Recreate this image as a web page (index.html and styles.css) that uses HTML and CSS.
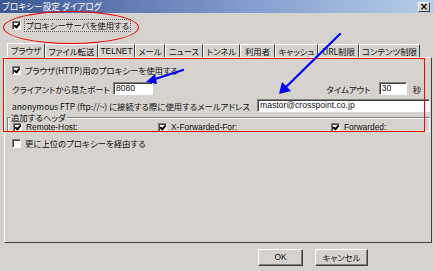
FILE: index.html
```html
<!DOCTYPE html>
<html lang="ja">
<head>
<meta charset="utf-8">
<title>プロキシー設定 ダイアログ</title>
<link rel="stylesheet" href="styles.css">
</head>
<body>
<div class="dialog">
  <div class="titlebar">
    <span class="title">プロキシー設定 ダイアログ</span>
    <span class="close">×</span>
  </div>
  <div class="main">
    <label class="chk top-chk"><span class="box checked"></span><span class="dotted">プロキシーサーバを使用する</span></label>
    <div class="tabs">
      <span class="tab sel w38">ブラウザ</span>
      <span class="tab w53">ファイル転送</span>
      <span class="tab w37 latin">TELNET</span>
      <span class="tab w30">メール</span>
      <span class="tab w38">ニュース</span>
      <span class="tab w37">トンネル</span>
      <span class="tab w35">利用者</span>
      <span class="tab w43">キャッシュ</span>
      <span class="tab w41">URL制限</span>
      <span class="tab w61">コンテンツ制限</span>
    </div>
    <div class="panel">
      <label class="chk row1"><span class="box checked"></span>ブラウザ(HTTP)用のプロキシーを使用する</label>
      <div class="row row2">
        <span class="lbl port-lbl">クライアントから見たポート</span>
        <span class="input port">8080</span>
        <span class="grow"></span>
        <span class="lbl">タイムアウト</span>
        <span class="input tmo">30</span>
        <span class="lbl sec">秒</span>
      </div>
      <div class="row row3">
        <span class="lbl mail-lbl">anonymous FTP (ftp://~) に接続する際に使用するメールアドレス</span>
        <span class="input mail">mastor@crosspoint.co.jp</span>
      </div>
      <div class="group">
        <span class="legend">追加するヘッダ</span>
        <div class="hdrs">
          <label class="chk"><span class="box checked"></span><span class="latin">Remote-Host:</span></label>
          <label class="chk"><span class="box checked"></span><span class="latin">X-Forwarded-For:</span></label>
          <label class="chk"><span class="box checked"></span><span class="latin">Forwarded:</span></label>
        </div>
      </div>
      <label class="chk row5"><span class="box"></span>更に上位のプロキシーを経由する</label>
    </div>
    <div class="footer">
      <span class="btn ok">OK</span>
      <span class="btn cancel">キャンセル</span>
    </div>
  </div>
  <div class="ellipse"></div>
  <div class="redbox"></div>
  <svg class="arrows" width="434" height="271" viewBox="0 0 434 271">
    <g stroke="#0000ff" stroke-width="2.2" fill="none" stroke-linecap="round">
      <line x1="340" y1="34" x2="284" y2="89"/>
      <line x1="183" y1="70" x2="152" y2="80"/>
    </g>
    <g fill="#0000ff">
      <polygon points="279,94 282,82 291,91"/>
      <polygon points="146,82 155,74 157,84"/>
    </g>
  </svg>
</div>
</body>
</html>
```

FILE: styles.css
```css
* { box-sizing: border-box; }
html, body { margin: 0; padding: 0; }
body {
  width: 434px;
  height: 271px;
  overflow: hidden;
  background: #d6d3ce;
  font-family: "Noto Sans CJK JP", "Noto Sans", sans-serif;
  font-size: 8.4px;
  font-feature-settings: "palt";
  color: #111;
}
.dialog {
  position: relative;
  width: 434px;
  height: 271px;
  display: flex;
  flex-direction: column;
}
.titlebar {
  height: 13px;
  display: flex;
  align-items: center;
  justify-content: space-between;
  padding: 0 4px 0 2px;
  background: linear-gradient(90deg, #3c5894 0%, #7f9bcc 55%, #b8cdea 100%);
  color: #fff;
  font-size: 8.6px;
  line-height: 13px;
}
.close {
  width: 12px;
  height: 10px;
  background: #d6d3ce;
  color: #000;
  border: 1px solid;
  border-color: #fff #404040 #404040 #fff;
  font-size: 10px;
  line-height: 8px;
  text-align: center;
  font-weight: bold;
  font-family: "DejaVu Sans", sans-serif;
}
.main {
  flex: 1;
  display: flex;
  flex-direction: column;
  padding: 0 2px 0 4px;
}
.chk {
  display: flex;
  align-items: center;
  gap: 4px;
  line-height: 11px;
  white-space: nowrap;
}
.box {
  width: 9px;
  height: 9px;
  flex: none;
  background: #fff;
  border: 1px solid;
  border-color: #808080 #fff #fff #808080;
  box-shadow: inset 1px 1px 0 #404040;
  position: relative;
}
.box.checked::after {
  content: "";
  position: absolute;
  left: 2px;
  top: 0px;
  width: 2px;
  height: 4px;
  border: solid #000;
  border-width: 0 2px 2px 0;
  transform: rotate(40deg);
}
.top-chk {
  margin: 7px 0 0 8px;
  height: 11px;
}
.dotted { outline: 1px dotted #666; outline-offset: 0; padding: 0 1px; }
.tabs {
  display: flex;
  margin: 13px 0 0 3px;
  height: 13px;
  align-items: flex-end;
}
.tab {
  height: 13px;
  line-height: 12px;
  border-top: 1px solid #fff;
  border-left: 1px solid #fff;
  border-right: 1px solid #404040;
  text-align: center;
  white-space: nowrap;
  flex: none;
}
.tab.sel {
  height: 15px;
  margin-bottom: -1px;
  background: #d6d3ce;
  position: relative;
  z-index: 1;
}
.latin { font-family: "Liberation Sans", sans-serif; font-size: 8.4px; }
.w38 { width: 38px; } .w53 { width: 53px; } .w37 { width: 37px; }
.w30 { width: 30px; } .w35 { width: 35px; } .w43 { width: 43px; }
.w41 { width: 41px; } .w61 { width: 61px; }
.panel {
  height: 186px;
  border: 1px solid;
  border-color: #fff #404040 #404040 #fff;
  padding: 7px 0 0 7px;
  display: flex;
  flex-direction: column;
}
.row1 { height: 11px; }
.row {
  display: flex;
  align-items: center;
  white-space: nowrap;
}
.row2 { margin-top: 6px; height: 13px; padding-right: 10px; }
.row3 { margin-top: 4px; height: 13px; padding-right: 1px; }
.grow { flex: 1; }
.port-lbl { width: 101px; flex: none; }
.mail-lbl { width: 245px; flex: none; }
.input {
  background: #fff;
  border: 1px solid;
  border-color: #808080 #fff #fff #808080;
  box-shadow: inset 1px 1px 0 #404040;
  height: 13px;
  line-height: 11px;
  padding-left: 2px;
  font-family: "Liberation Sans", sans-serif;
  font-size: 8.6px;
}
.port { width: 40px; }
.tmo { width: 28px; margin-left: 8px; }
.sec { margin-left: 6px; }
.mail { flex: 1; }
.group {
  margin: 5px 1px 0 -5px;
  padding: 0 0 0 5px;
  height: 15px;
  border: 1px solid;
  border-color: #808080 #fff #fff #808080;
  box-shadow: inset 1px 1px 0 #fff;
}
.legend {
  display: block;
  width: fit-content;
  margin: -5px 0 0 -3px;
  padding: 0 1px;
  line-height: 9px;
  height: 9px;
  background: #d6d3ce;
}
.hdrs {
  display: grid;
  grid-template-columns: 145px 173px auto;
  align-items: center;
  height: 10px;
}
.row5 { margin-top: 6px; height: 11px; }
.footer {
  display: flex;
  justify-content: flex-end;
  gap: 12px;
  padding: 6px 64px 0 0;
}
.btn {
  width: 45px;
  height: 17px;
  border: 1px solid;
  border-color: #fff #404040 #404040 #fff;
  box-shadow: inset -1px -1px 0 #808080;
  text-align: center;
  line-height: 15px;
  font-size: 8.4px;
}
.btn.ok { font-family: "Liberation Sans", sans-serif; }
.btn.cancel { width: 53px; }
.ellipse {
  position: absolute;
  left: 3px;
  top: 11px;
  width: 136px;
  height: 33px;
  border: 1px solid #e00;
  border-radius: 50%;
}
.redbox {
  position: absolute;
  left: 3px;
  top: 58px;
  width: 422px;
  height: 74px;
  border: 1px solid #f00;
}
.arrows {
  position: absolute;
  left: 0;
  top: 0;
  pointer-events: none;
}
```
